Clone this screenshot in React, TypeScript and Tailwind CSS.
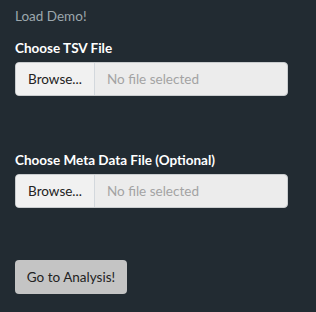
const FileInput: React.FC = () => {
  return (
    <div className="flex h-[34px] w-[273px] overflow-hidden rounded border border-[#c9ccce] bg-[#ececec]">
      <div className="flex w-[79px] items-center justify-center border-r border-[#d3d8dd] bg-[#f1f1f1] text-[#222]">
        Browse...
      </div>
      <div className="flex flex-1 items-center pl-[12px] text-[#a3a3a3]">No file selected</div>
    </div>
  );
};

export default function App() {
  return (
    <div
      className="h-[312px] w-[316px] bg-[#222b32] px-[15px] pt-[6px] text-[13.5px] leading-[20px]"
      style={{ fontFamily: 'Lato, Roboto, sans-serif' }}
    >
      <div className="text-[#9ca7ad]">Load Demo!</div>

      {/* TSV file */}
      <div className="mt-[12px] font-bold text-white">Choose TSV File</div>
      <div className="mt-[4px]">
        <FileInput />
      </div>

      {/* optional meta data */}
      <div className="mt-[54px] font-bold text-white">Choose Meta Data File (Optional)</div>
      <div className="mt-[4px]">
        <FileInput />
      </div>

      <button className="mt-[52px] h-[34px] w-[112px] rounded bg-[#c4c4c4] text-[#222]">
        Go to Analysis!
      </button>
    </div>
  );
}
